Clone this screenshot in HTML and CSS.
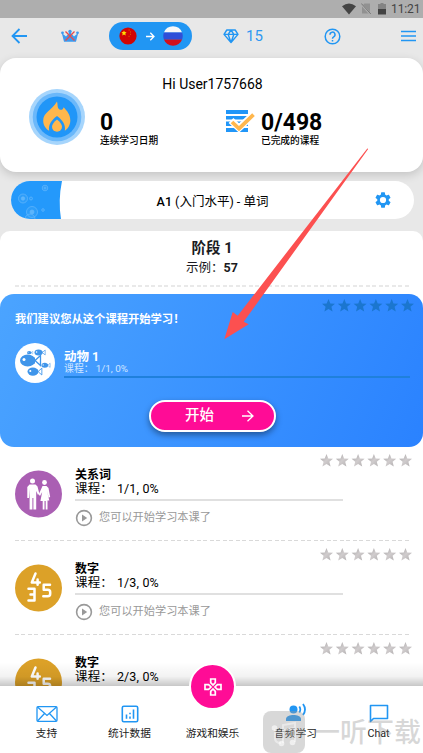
FILE: index.html
```html
<!DOCTYPE html>
<html lang="zh">
<head>
<meta charset="utf-8">
<title>Lessons</title>
<link rel="stylesheet" href="styles.css">
</head>
<body>
<svg width="0" height="0" class="defs">
  <defs>
    <linearGradient id="silver" x1="0" y1="0" x2="1" y2="1"><stop offset="0" stop-color="#a3a1a2"/><stop offset=".5" stop-color="#d0cccd"/><stop offset="1" stop-color="#b0adae"/></linearGradient>
    <path id="star" d="M6.5 0 8.3 4.4 13 4.8 9.4 7.8 10.6 12.5 6.5 10 2.4 12.5 3.6 7.8 0 4.8 4.7 4.4Z"/>
    <g id="stars">
      <use href="#star"/><use href="#star" x="15.8"/><use href="#star" x="31.6"/><use href="#star" x="47.4"/><use href="#star" x="63.2"/><use href="#star" x="79"/>
    </g>
    <g id="play"><circle cx="9" cy="9" r="7.4" fill="none" stroke="#999" stroke-width="1.6"/><path d="M7 5.6 12.2 9 7 12.4Z" fill="#999"/></g>
    <g id="digits" fill="none" stroke="#fff" stroke-width="2.5" stroke-linecap="round" stroke-linejoin="round">
      <path d="M20.5 9.500 16.800 18.500h8M22.600 15.500v5.200"/>
      <path d="M13.500 24.700h6v5.800h-4M19.500 30.500v6h-6"/>
      <path d="M35 20.800h-6.300v5h4q2.500 0 2.500 2.500v1.500q0 2.500-2.500 2.500h-4.400"/>
    </g>
    <g id="fish"><ellipse cx="7.700" cy="6" rx="7.700" ry="6"/><path d="M15 6 20.500 1v10Z" fill="none" stroke="#3f95ea" stroke-width="1.300"/><path d="M12 3h3v6h-3Z"/><circle cx="4" cy="5" r="1.500" fill="#fff"/></g>
  </defs>
</svg>
<div class="app">
  <div class="status">
    <svg width="14" height="12" viewBox="0 0 14 12"><path d="M0 3.200Q7-2.400 14 3.200L7 11.500Z" fill="#444"/></svg>
    <svg class="sim" width="10" height="12" viewBox="0 0 10 12"><path d="M3.500.5H9v10H1V3Z" fill="#919191"/><path d="M0 .8 9.500 11.300" stroke="#aeaeae" stroke-width="2"/><path d="M.3.5 9.800 11" stroke="#777" stroke-width="1"/></svg>
    <svg class="bat" width="8" height="12" viewBox="0 0 8 12"><path d="M2.500 0h3v1H8v5H0V1h2.500Z" fill="#848484"/><path d="M0 6h8v5.500H0Z" fill="#424242"/></svg>
    <span>11:21</span>
  </div>
  <header class="top">
    <svg class="back" width="17" height="16" viewBox="0 0 17 16" fill="none" stroke="#2196f3" stroke-width="1.800"><path d="M16 8H1.500M8.500 1 1.500 8l7 7"/></svg>
    <svg class="crown" width="18" height="14" viewBox="0 0 18 14"><path d="M.8 4 5 7.500 9 3l4 4.500L17.200 4 15 12.800H3Z" fill="#3b9bf0"/><circle cx="1.500" cy="3.800" r="1.400" fill="#3b9bf0"/><circle cx="16.500" cy="3.800" r="1.400" fill="#3b9bf0"/><circle cx="9" cy="2.500" r="1.700" fill="#3b9bf0"/><path d="M4.500 2.500 13.500 11.500M13.500 2.500l-9 9" stroke="#e64d4d" stroke-width="1.400"/></svg>
    <div class="langs">
      <svg width="18" height="18" viewBox="0 0 18 18"><circle cx="9" cy="9" r="8.600" fill="#d10505"/><path d="m5 3.500.8 1.600 1.800.2-1.300 1.300.4 1.900L5 7.600l-1.700.9.4-1.900L2.400 5.300l1.800-.2Z" fill="#ffde00"/><path d="M9.500 3h1.200M11 5h1M11 7.300h1M9.500 9.300h1" stroke="#e06000" stroke-width="1"/></svg>
      <svg width="9" height="9" viewBox="0 0 9 9" fill="none" stroke="#fff" stroke-width="1.300"><path d="M0 4.500h8M4.300.7 8 4.500 4.300 8.300"/></svg>
      <svg width="20" height="20" viewBox="0 0 20 20"><path d="M.9 6.500a9.800 9.800 0 0 1 18.200 0Z" fill="#f8f8f8"/><path d="M.9 6.500h18.200a10 10 0 0 1 0 7H.9a10 10 0 0 1 0-7Z" fill="#2f4fd8"/><path d="M.9 13.500h18.200a9.800 9.800 0 0 1-18.200 0Z" fill="#d2101e"/></svg>
    </div>
    <div class="gems">
      <svg width="16" height="15" viewBox="0 0 16 15" fill="none" stroke="#2196f3" stroke-width="1.400" stroke-linejoin="round"><path d="M3.800 1h8.400L15 5.400 8 13.500 1 5.400ZM1 5.400h14M5.200 5.400 8 13.500l2.800-8.100M5.200 5.400 8 1l2.800 4.400"/></svg>
      <span>15</span>
    </div>
    <svg class="help" width="17" height="17" viewBox="0 0 17 17" fill="none" stroke="#2196f3" stroke-width="1.500"><circle cx="8.500" cy="8.500" r="7.300"/><path d="M6 6.700a2.500 2.500 0 1 1 3.700 2.100q-1.200.7-1.200 1.900M8.500 12v1.500"/></svg>
    <svg class="menu" width="15" height="12" viewBox="0 0 15 12" stroke="#2196f3" stroke-width="1.500"><path d="M0 1.500h15M0 6h15M0 10.500h15"/></svg>
  </header>

  <section class="profile">
    <div class="hi">Hi User1757668</div>
    <div class="stats">
      <svg class="flame" width="56" height="56" viewBox="0 0 56 56"><circle cx="28" cy="28" r="28" fill="#a6d5fc"/><circle cx="28" cy="28" r="24.300" fill="#6bb8fa"/><circle cx="28" cy="28" r="20.500" fill="#2196f8"/><path d="M28 12.500c1 3-.1 6.500 2.500 8 2 1 3.700-.3 4.200-2.300 3.500 3.800 6.600 7.600 6.600 13.300 0 4.700-2.500 8.400-5.500 10.300 1.200-5.500-2.200-10.700-7.800-14.800-5.600 4.100-9 9.300-7.800 14.800-3.700-2-6-5.700-6-10.300 0-8 8.800-10.500 13.800-19Z" fill="#ffb74d"/><path d="M28 30.500c3 2.600 5 4.700 5 7.300a5 5 0 0 1-10 0c0-2.600 2-4.700 5-7.300Z" fill="#ffb74d"/></svg>
      <div class="stat"><b>0</b><small>连续学习日期</small></div>
      <svg class="tasks" width="30" height="24" viewBox="0 0 30 24"><path d="M0 0h22v4H0ZM0 6h22v3.500H0ZM0 11.500h22V16H0ZM0 18h22v4H0Z" fill="#2196f8"/><path d="m5 10.500 8 7.500L27.500 4.500" fill="none" stroke="#fff" stroke-width="7"/><path d="m6 12 7 6.700L27.500 4.700" fill="none" stroke="#ffb74d" stroke-width="3.800"/></svg>
      <div class="stat"><b>0/498</b><small>已完成的课程</small></div>
    </div>
  </section>

  <section class="level">
    <svg class="bubbles" width="52" height="38" viewBox="0 0 52 38"><path d="M0 0h51q-4 19-1 38H0Z" fill="#2499fb"/><g fill="#5cb5fc" stroke="#65b8fc" fill-opacity=".2" stroke-width=".7"><circle cx="12" cy="17.500" r="4.500"/><circle cx="12" cy="17.500" r="1.700" fill-opacity="1"/><circle cx="20" cy="17.500" r="1.500"/><circle cx="34" cy="7" r="2.800"/><circle cx="34" cy="7" r="1"/><circle cx="21" cy="31" r="5.500"/><circle cx="21" cy="31" r="2" fill-opacity="1"/><circle cx="19" cy="38" r="5"/><circle cx="32" cy="29" r="1.300"/></g></svg>
    <div class="level-name"><b>A1</b> (入门水平) - 单词</div>
    <svg class="gear" width="16" height="16" viewBox="2 2 20 20"><path fill="#2196f3" d="M19.140 12.940c.04-.3.060-.61.060-.94s-.02-.64-.07-.94l2.030-1.580a.49.49 0 0 0 .12-.61l-1.920-3.320a.49.49 0 0 0-.59-.22l-2.390.96a7 7 0 0 0-1.620-.94L14.400 2.810a.48.48 0 0 0-.48-.41h-3.840a.47.47 0 0 0-.47.41l-.36 2.540a7.300 7.300 0 0 0-1.620.94l-2.390-.96a.47.47 0 0 0-.59.22L2.740 8.870a.47.47 0 0 0 .12.610l2.030 1.580a6 6 0 0 0 0 1.880l-2.030 1.580a.49.49 0 0 0-.12.61l1.920 3.320c.12.220.37.290.59.220l2.390-.96c.5.380 1.030.7 1.620.94l.36 2.540c.05.240.240.410.480.410h3.840c.24 0 .44-.17.470-.41l.36-2.540a7 7 0 0 0 1.620-.94l2.390.96c.22.080.470 0 .59-.22l1.920-3.320a.47.47 0 0 0-.12-.61ZM12 15.900a3.900 3.900 0 1 1 0-7.800 3.900 3.900 0 0 1 0 7.800Z"/></svg>
  </section>

  <main class="sheet">
    <div class="stage">
      <h2>阶段 1</h2>
      <p>示例：<b>57</b></p>
    </div>
    <section class="featured">
      <div class="f-stars"><svg width="92" height="13" fill="#1b76cf"><use href="#stars"/></svg></div>
      <h3>我们建议您从这个课程开始学习！</h3>
      <div class="f-body">
        <svg width="40" height="40" viewBox="0 0 40 40"><circle cx="20" cy="20" r="20" fill="#fff"/><g fill="#3f95ea"><use href="#fish" transform="translate(5 11.500)"/><use href="#fish" transform="translate(19.500 6.500) scale(.52 .5)"/><use href="#fish" transform="translate(12.500 24.500) scale(.7 .68)"/><use href="#fish" transform="translate(26.500 19.800) scale(.42)"/><use href="#fish" transform="translate(12 8) scale(.28)"/></g></svg>
        <div class="f-info"><b>动物 1</b><span class="count"><em>课程：</em>1/1, 0%</span><i></i></div>
      </div>
      <div class="start"><span>开始</span><svg width="12" height="12" viewBox="0 0 12 12" fill="none" stroke="#fff" stroke-width="1.300"><path d="M0 6h11M5.500.7 11 6l-5.500 5.300"/></svg></div>
    </section>

    <article class="lesson">
      <div class="l-stars"><svg width="92" height="13" fill="url(#silver)"><use href="#stars"/></svg></div>
      <div class="l-body">
        <svg class="pic" width="47" height="48" viewBox="0 0 47 48"><circle cx="23.500" cy="24" r="23.500" fill="#aa5fb3"/><g fill="#fff"><circle cx="17.500" cy="11" r="2.500"/><path d="M14.500 14.500h6l2 2 1.800 7-1.300 1.500-1.800-4V39.500h-2.800V28h-1v11.500h-2.800V19l-.6 9h-1.700V17Z"/><circle cx="29.500" cy="12.500" r="2.400"/><path d="M27.500 16h4l2 2 1.700 9-1.400.5L32 21l2.300 9.500h-1.800v9h-1.800V31h-1.200v8.500h-1.800V31h-2.300l1.800-9-2.200 4-1.300-1.500Z"/></g></svg>
        <div class="l-info"><b>关系词</b><span class="count"><em>课程：</em>1/1, 0%</span><i></i><div class="hint"><svg width="18" height="18"><use href="#play"/></svg><span>您可以开始学习本课了</span></div></div>
      </div>
    </article>
    <article class="lesson">
      <div class="l-stars"><svg width="92" height="13" fill="url(#silver)"><use href="#stars"/></svg></div>
      <div class="l-body">
        <svg class="pic" width="47" height="48" viewBox="0 0 47 48"><circle cx="23.500" cy="24" r="23.500" fill="#dca128"/><use href="#digits"/></svg>
        <div class="l-info"><b>数字</b><span class="count"><em>课程：</em>1/3, 0%</span><i></i><div class="hint"><svg width="18" height="18"><use href="#play"/></svg><span>您可以开始学习本课了</span></div></div>
      </div>
    </article>
    <article class="lesson">
      <div class="l-stars"><svg width="92" height="13" fill="url(#silver)"><use href="#stars"/></svg></div>
      <div class="l-body">
        <svg class="pic" width="47" height="48" viewBox="0 0 47 48"><circle cx="23.500" cy="24" r="23.500" fill="#dca128"/><use href="#digits"/></svg>
        <div class="l-info"><b>数字</b><span class="count"><em>课程：</em>2/3, 0%</span></div>
      </div>
    </article>
  </main>

  <nav class="tabs">
    <div class="tab"><svg width="22" height="18" viewBox="0 0 22 18" fill="none" stroke="#2196f3" stroke-width="1.300"><rect x="1" y="1.700" width="20" height="14.600" rx="1"/><path d="m1.500 2 9.500 8.500L20.500 2M1.500 16l7-7.500M20.500 16l-7-7.500"/></svg><span>支持</span></div>
    <div class="tab"><svg width="18" height="18" viewBox="0 0 18 18" fill="none" stroke="#2196f3" stroke-width="1.600"><rect x="1.300" y="1.300" width="15.400" height="15.400" rx="1.500"/><path d="M5.500 9.500v4.300M9 7.800v1.500M9 11.500v2.300M12.500 4.500v9.300"/></svg><span>统计数据</span></div>
    <div class="tab"><div class="fab"><svg width="20" height="20" viewBox="0 0 20 20" fill="none" stroke="#fff" stroke-width="1.700"><path d="M7.700 2h4.600v3.600L10 8 7.700 5.600ZM7.700 18h4.600v-3.600L10 12l-2.300 2.400ZM2 7.700v4.600h3.600L8 10 5.600 7.700ZM18 7.700v4.600h-3.600L12 10l2.400-2.300Z"/></svg></div><span>游戏和娱乐</span></div>
    <div class="tab"><svg width="22" height="20" viewBox="0 0 22 20"><circle cx="8.500" cy="6.500" r="4" fill="#2196f3"/><path d="M1 18v-2c0-2.700 4-4 7.500-4s7.500 1.300 7.500 4v2Z" fill="#2196f3"/><path d="M14.300 3.500q2 3 0 6M18 1q4 5.500 0 11" fill="none" stroke="#2196f3" stroke-width="1.800"/></svg><span>音频学习</span></div>
    <div class="tab"><svg width="20" height="19" viewBox="0 0 20 19" fill="none" stroke="#2196f3" stroke-width="1.600" stroke-linejoin="round"><path d="M1.500 1.500h17v13H4.500l-3 3Z"/></svg><span>Chat</span></div>
  </nav>

  <div class="mark">
    <svg width="42" height="42" viewBox="0 0 42 42"><rect width="42" height="42" rx="8" fill="#999" fill-opacity=".38"/><g fill="none" stroke="#fff" stroke-opacity=".45" stroke-width="2"><path d="M12 18v9q0 5 6 5M20 32V14l12-2v19M20 19l12-2"/></g><g fill="#fff" fill-opacity=".6"><circle cx="11.500" cy="17" r="2.800"/><circle cx="18.500" cy="32.500" r="2.800"/><circle cx="29.500" cy="31.500" r="2.800"/></g></svg>
    <span>一听下载</span>
  </div>
  <svg class="pointer" width="146" height="192" viewBox="0 0 146 192"><path d="M146.200 1 145.300.4 15.700 167.700 10.700 164 2.300 191.300 26.700 176.300 21.700 173.700Z" fill="#fc5050"/></svg>
</div>
</body>
</html>
```

FILE: styles.css
```css
* { box-sizing: border-box; }
body { margin: 0; font-family: Roboto, "Noto Sans CJK SC", sans-serif; color: #000; }
svg { display: block; flex: none; }
h2, h3, p { margin: 0; }
.defs { position: absolute; }
.app { position: relative; width: 423px; height: 753px; overflow: hidden; background: #e8e8e8; display: flex; flex-direction: column; }

.status { height: 18px; flex: none; background: #aeaeae; display: flex; align-items: center; justify-content: flex-end; padding-right: 4px; font-size: 12px; color: #444; }
.status span { margin-left: 5px; width: 28px; letter-spacing: -.1px; white-space: nowrap; }
.sim { margin-left: 5px; }
.bat { margin-left: 7px; }

.top { height: 40px; flex: none; display: flex; align-items: center; padding: 0 7px 4px 11px; }
.crown { margin-left: 33px; }
.langs { margin-left: 30px; width: 83px; height: 28px; border-radius: 14px; background: #2196f3; display: flex; align-items: center; justify-content: space-between; padding: 0 9px 0 10px; }
.gems { margin-left: 31px; display: flex; align-items: center; gap: 7px; color: #2f98f2; font-size: 15px; line-height: 18px; width: 101px; }
.menu { margin-left: auto; }

.profile { height: 114px; flex: none; background: #fff; border-radius: 16px; box-shadow: 0 3px 10px rgba(0,0,0,.16); padding-top: 17px; }
.hi { text-align: center; font-size: 14px; line-height: 18px; text-indent: 2px; }
.stats { display: flex; padding-left: 29px; margin-top: -4px; }
.stat { display: flex; flex-direction: column; margin-top: 22px; margin-left: 15px; width: 111px; }
.stat b { font-size: 23px; line-height: 23px; }
.stat small { font-size: 9.700px; line-height: 13px; font-weight: 500; white-space: nowrap; }
.tasks { margin: 21px -10px 0 15px; }

.level { height: 38px; flex: none; margin: 9px 9px 0 11px; border-radius: 19px; background: #fff; display: flex; align-items: center; overflow: hidden; }
.level-name { flex: 1; text-align: center; font-size: 12.500px; padding-right: 13px; white-space: nowrap; }
.level-name b { font-weight: 500; }
.gear { margin-right: 23px; }

.sheet { margin-top: 12px; background: #fff; border-radius: 10px 10px 0 0; flex: 1; min-height: 0; overflow: hidden; }
.stage { height: 56px; margin: 0 12px 7px 15px; background: repeating-linear-gradient(90deg, #e9e9e9 0 3.700px, transparent 3.700px 6.500px) bottom / 100% 2px no-repeat; text-align: center; padding: 8px 2px 0 0; color: #1b1b22; }
.stage h2 { font-size: 14.500px; line-height: 20px; font-weight: 700; }
.stage p { font-size: 12.500px; line-height: 18px; }

.featured { height: 153px; border-radius: 14px; background: linear-gradient(115deg, #4ba4ff, #2a82ff); color: #fff; padding: 5px 9px 0 15px; }
.f-stars { display: flex; justify-content: flex-end; }
.featured h3 { font-size: 11.300px; line-height: 16px; font-weight: 700; }
.f-body { display: flex; margin-top: 15px; }
.f-info { margin-left: 9px; width: 346px; display: flex; flex-direction: column; }
.f-info b { font-size: 12.500px; line-height: 14px; margin-top: 7px; }
.f-info span { font-size: 9.900px; line-height: 9px; color: #d0e5ff; }
.f-info i { height: 2px; margin-top: 3px; background: #1f80dc; }
.count { display: flex; }
.count em { font-style: normal; width: 3.350em; white-space: nowrap; }
.f-info .count em { width: 3.200em; }
.start { width: 127px; height: 32px; margin: 17px 0 0 134px; border: 2px solid #fff; border-radius: 16px; background: #ff0c96; box-shadow: 0 3px 6px rgba(0,0,0,.4); display: flex; align-items: center; justify-content: space-between; padding: 0 20px 0 34px; font-size: 14.500px; line-height: 20px; font-weight: 500; }

.lesson { height: 94.200px; margin: 0 11px 0 15px; background: repeating-linear-gradient(90deg, #d9d9d9 0 3.700px, transparent 3.700px 6.500px) bottom left / 396px 1px no-repeat; }
.l-stars { height: 20px; padding-top: 7px; display: flex; justify-content: flex-end; }
.l-body { display: flex; }
.pic { margin-top: 3px; }
.l-info { margin-left: 13px; width: 268px; display: flex; flex-direction: column; }
.l-info b { font-size: 12px; line-height: 14px; margin-top: 1px; }
.l-info .count { font-size: 12.500px; line-height: 13px; letter-spacing: .15px; }
.l-info i { height: 2px; margin-top: 4px; background: #e0e0e0; }
.hint { display: flex; align-items: center; gap: 6px; margin-top: 7px; font-size: 11.200px; line-height: 18px; color: #999; }
.hint span { padding-top: 1px; }

.tabs { position: relative; height: 67px; flex: none; background: #fff; display: flex; padding: 0 3px 0 5px; }
.tabs::before { content: ""; position: absolute; left: 0; right: 0; top: -24px; height: 24px; background: linear-gradient(rgba(0,0,0,0), rgba(0,0,0,.05) 60%, rgba(0,0,0,.22)); }
.tab { width: 83px; display: flex; flex-direction: column; align-items: center; justify-content: flex-end; padding-bottom: 12px; gap: 3px; font-size: 10.700px; line-height: 15px; color: #222; }
.fab { position: absolute; left: 189px; top: -23px; width: 47px; height: 47px; border-radius: 50%; border: 2px solid #fff; background: #ff0c96; display: flex; align-items: center; justify-content: center; }

.mark { position: absolute; left: 263px; top: 711px; display: flex; align-items: center; gap: 8px; font-size: 27px; line-height: 30px; font-weight: 500; color: rgba(140,140,140,.34); white-space: nowrap; }
.mark span { padding-top: 2px; }
.pointer { position: absolute; left: 222px; top: 148px; }
```
